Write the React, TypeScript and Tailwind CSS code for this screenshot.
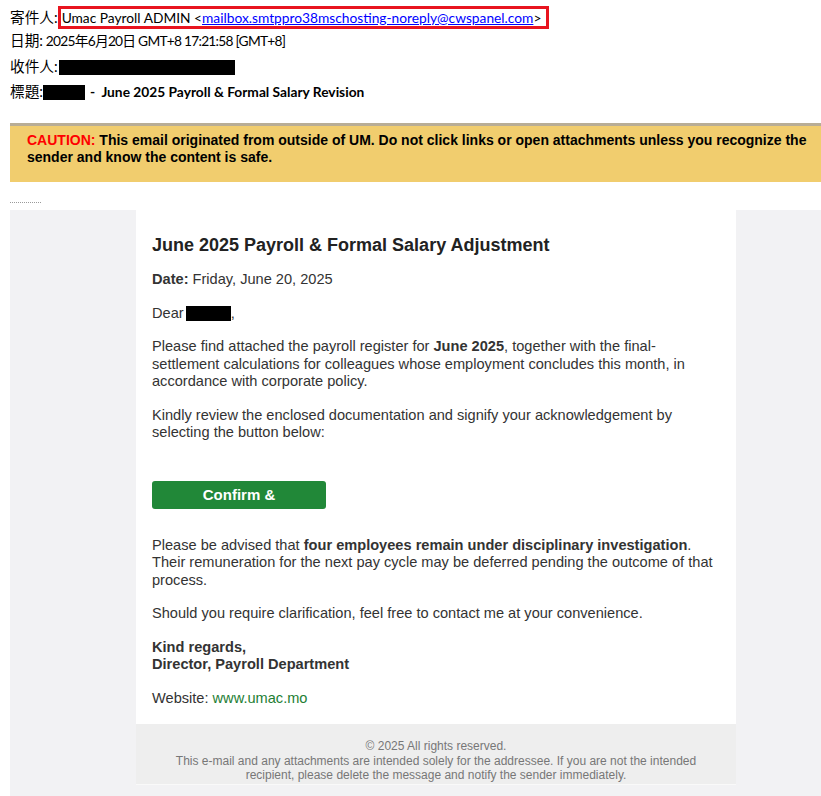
import React from 'react';

const cjk = { fontFamily: 'Lato, "Noto Sans CJK TC", sans-serif' };
const arial = { fontFamily: '"Liberation Sans", Arial, sans-serif' };

function Redacted({ className }: { className: string }) {
  return <span className={`inline-block bg-black align-middle ${className}`} />;
}

function Label({ children }: { children: React.ReactNode }) {
  return <span className="text-[14.67px] tracking-normal">{children}</span>;
}

export default function App() {
  return (
    <div className="w-[821px] h-[796px] overflow-hidden bg-white">
      {/* ── Mail header ── */}
      <div className="pl-[10px] pt-[6px] text-[13.75px] text-black leading-[20px]" style={cjk}>
        <div className="flex items-center h-[23px]">
          <Label>寄件人:</Label>
          <span className="border-[3px] border-[#e8141f] pl-[1px] pr-[5px] h-[23px] flex items-center">
            Umac Payroll ADMIN &lt;
            <span className="text-[#0000ff] underline">mailbox.smtppro38mschosting-noreply@cwspanel.com</span>
            &gt;
          </span>
        </div>
        <div className="mt-[2px] h-[20px] flex items-center whitespace-pre">
          <Label>日期:</Label>
          <span className="tracking-[-0.75px]"> 2025年6月20日 GMT+8 17:21:58 [GMT+8]</span>
        </div>
        <div className="mt-[6px] h-[20px] flex items-center">
          <Label>收件人:</Label>
          <Redacted className="w-[176px] h-[15px] ml-[1px]" />
        </div>
        <div className="mt-[5px] h-[20px] flex items-center">
          <Label>標題:</Label>
          <Redacted className="w-[42px] h-[15px]" />
          <span className="ml-[5px] font-bold">-&nbsp; June 2025 Payroll &amp; Formal Salary Revision</span>
        </div>
      </div>

      {/* ── Caution banner ── */}
      <div className="ml-[10px] mt-[21px] w-[830px] h-[59px] border-t-[3px] border-[#b8ad96] bg-[#f1cd6e] pl-[17px] pt-[6px]">
        <p className="text-[14px] font-bold leading-[17px] text-black w-[790px]" style={arial}>
          <span className="text-[#ff0000]">CAUTION:</span> This email originated from outside of UM. Do not click links or open attachments unless you recognize the sender and know the content is safe.
        </p>
      </div>

      <div className="ml-[10px] mt-[20px] w-[31px] border-t border-dotted border-[#9a9a9a]" />

      {/* ── Message body ── */}
      <div className="ml-[10px] mt-[7px] w-[852px] bg-[#f2f2f4] pb-[20px]" style={arial}>
        <div className="mx-auto w-[600px]">
          <div className="bg-white px-4 pt-[24px] pb-[17px] text-[14.6px] leading-[17.5px] text-[#333]">
            <h1 className="text-[18px] leading-[22px] font-bold text-[#222] mb-[15px]">
              June 2025 Payroll &amp; Formal Salary Adjustment
            </h1>
            <p className="mb-4"><b>Date:</b> Friday, June 20, 2025</p>
            <p className="mb-4 flex items-center">
              Dear<Redacted className="w-[45px] h-[15px] ml-[2px]" />,
            </p>
            <p className="mb-4">
              Please find attached the payroll register for <b>June 2025</b>, together with the final-settlement calculations for colleagues whose employment concludes this month, in accordance with corporate policy.
            </p>
            <p className="mb-[39px]">
              Kindly review the enclosed documentation and signify your acknowledgement by selecting the button below:
            </p>
            <div className="w-[174px] h-[28px] rounded-[3px] bg-[#218838] flex items-center justify-center text-white font-bold text-[15px] mb-[28px]">
              Confirm &amp;
            </div>
            <p className="mb-4">
              Please be advised that <b>four employees remain under disciplinary investigation</b>. Their remuneration for the next pay cycle may be deferred pending the outcome of that process.
            </p>
            <p className="mb-4">Should you require clarification, feel free to contact me at your convenience.</p>
            <p className="mb-4 font-bold">
              Kind regards,<br />Director, Payroll Department
            </p>
            <p>
              Website: <span className="text-[#1e7e34]">www.umac.mo</span>
            </p>
          </div>
          <div className="bg-[#eeeeee] border-b border-[#f9f9f9] pt-[15px] pb-[1px] px-5 text-center text-[12px] leading-[14.5px] text-[#777]">
            <p>© 2025 All rights reserved.</p>
            <p>
              This e-mail and any attachments are intended solely for the addressee. If you are not the intended recipient, please delete the message and notify the sender immediately.
            </p>
          </div>
        </div>
      </div>
    </div>
  );
}
